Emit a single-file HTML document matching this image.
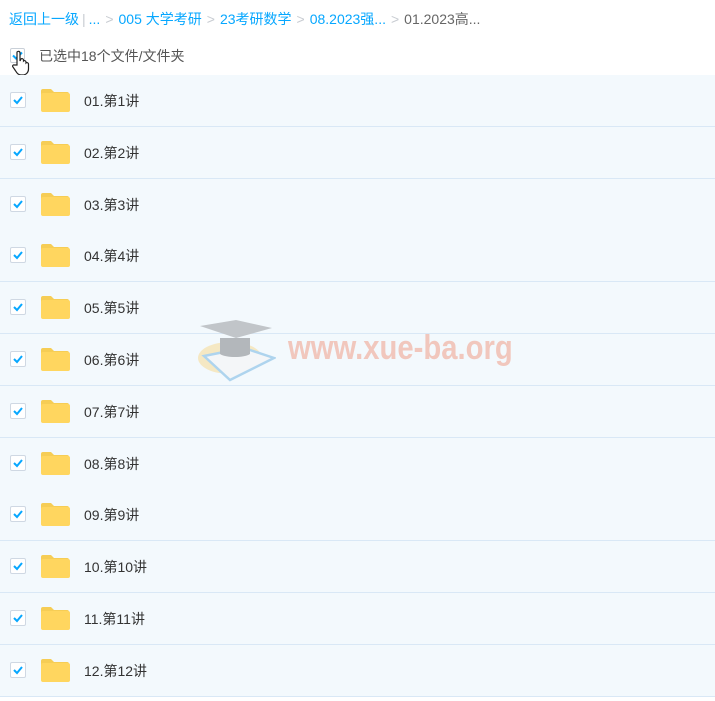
<!DOCTYPE html>
<html><head><meta charset="utf-8"><style>
body{margin:0;width:715px;height:701px;overflow:hidden;background:#fff;font-family:"Liberation Sans","Noto Sans CJK SC",sans-serif;position:relative}
.bc{position:absolute;left:9px;top:9px;font-size:14px;color:#06a7ff;white-space:nowrap}
.bc .g{color:#c8ccd2;margin:0 5px}
.bc .d{color:#666}
.sel{position:absolute;left:39px;top:46px;font-size:14px;color:#555}
.cb0{position:absolute;left:10px;top:48px;width:13px;height:13px;border:1px solid #c9d0d8;border-radius:2px;background:#fff}
.row{position:absolute;left:0;width:715px;height:51px;background:#f3f9fd;border-bottom:1px solid #d9e8f6}
.cb{position:absolute;left:10px;top:17px;width:14px;height:14px;border:1px solid #cfd8e3;border-radius:2px;background:#fff}
.cb svg{position:absolute;left:1px;top:1px}
.fd{position:absolute;left:40px;top:13px;width:30px;height:24px}
.nm{position:absolute;left:84px;top:16px;font-size:14px;color:#333}
.wm{position:absolute;left:288px;top:329px;font-size:34px;font-weight:bold;color:#f1c7bd;font-family:"Liberation Sans",sans-serif;transform:scaleX(0.86);transform-origin:left;white-space:nowrap}
</style></head><body>
<div class="bc">返回上一级<span class="g" style="margin:0 3px">|</span><span>...</span><span class="g">&gt;</span>005 大学考研<span class="g">&gt;</span>23考研数学<span class="g">&gt;</span>08.2023强...<span class="g">&gt;</span><span class="d">01.2023高...</span></div>
<div class="cb0"><svg width="13" height="13" viewBox="0 0 13 13"><path d="M2 6.5l3 3 6-6" stroke="#06a7ff" stroke-width="2" fill="none"/></svg></div>
<svg style="position:absolute;left:12px;top:50px" width="20" height="26" viewBox="0 0 20 26"><path d="M5 2c1-1 3-1 3 1v8l1-2c1-1 2.5 0 2.5 1v1c1-1 2.5 0 2.5 1v1c1-1 2.5 0 2.5 1v5c0 3-2 6-6 6H9c-3 0-4-2-6-5l-2-3c-1-1 0-2.5 1.5-2L5 15V3z" fill="#fff" stroke="#222" stroke-width="1.2"/></svg>
<div class="sel">已选中18个文件/文件夹</div>
<div id="rows"></div>
<svg style="position:absolute;left:196px;top:318px" width="80" height="68" viewBox="0 0 80 68"><ellipse cx="34" cy="40" rx="32" ry="16" fill="#f5e3b4" opacity=".8"/><path d="M8 38l40-8 30 10-44 22z" fill="#f4f6f8" stroke="#aed4ee" stroke-width="2.5"/><path d="M24 20h30v16c-6 4-24 4-30 0z" fill="#b3b7bb"/><path d="M4 8l36-6 36 8-36 10z" fill="#c1c5c9"/></svg>
<div class="wm">www.xue-ba.org</div>
<script>
var h='';for(var i=0;i<12;i++){var n=(i+1<10?'0':'')+(i+1);var t=Math.round(75+i*51.8);
h+='<div class="row" style="top:'+t+'px"><div class="cb"><svg width="12" height="12" viewBox="0 0 12 12"><path d="M2 6l3 3 5-6" stroke="#06a7ff" stroke-width="2" fill="none"/></svg></div><svg class="fd" viewBox="0 0 30 24"><path d="M1 3a2 2 0 0 1 2-2h8l3 3h13a2 2 0 0 1 2 2v1H1z" fill="#f6cd55"/><rect x="1" y="5" width="29" height="19" rx="2" fill="#ffd65f"/></svg><div class="nm">'+n+'.第'+(i+1)+'讲</div></div>';}
document.getElementById('rows').innerHTML=h;
</script>
</body></html>
